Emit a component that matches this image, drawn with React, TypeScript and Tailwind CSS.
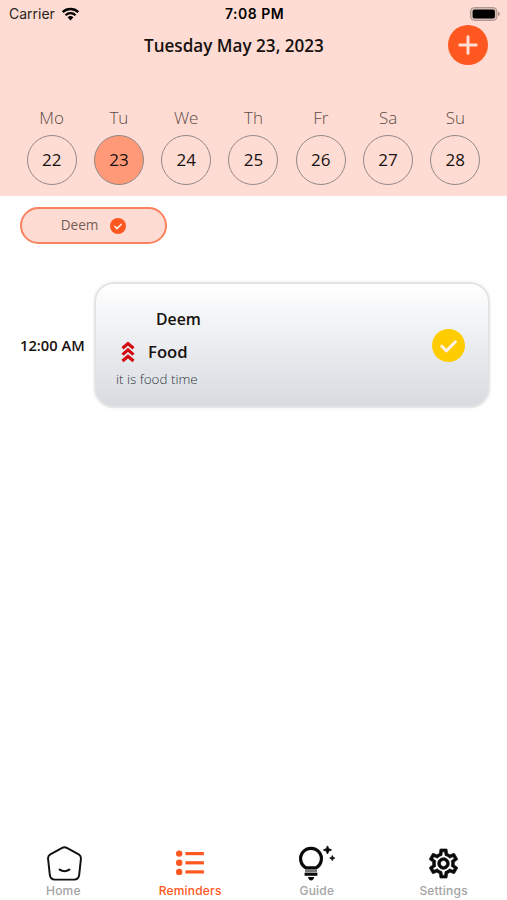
import React, { useState } from 'react'
import { MdOutlineSettings } from 'react-icons/md'

const days = [
  { name: 'Mo', date: 22 },
  { name: 'Tu', date: 23 },
  { name: 'We', date: 24 },
  { name: 'Th', date: 25 },
  { name: 'Fr', date: 26 },
  { name: 'Sa', date: 27 },
  { name: 'Su', date: 28 },
]

function StatusBar() {
  return (
    <div className="grid grid-cols-3 items-center h-[27px] pl-[9px] pr-[7px] font-['Inter',sans-serif] text-black">
      <div className="flex items-center gap-[6px]">
        <span className="text-[14px] leading-none text-[#2a2320]">Carrier</span>
        <svg width="19" height="14" viewBox="0 0 18 14">
          <path d="M1.2 5.1a11.3 11.3 0 0 1 15.6 0" fill="none" stroke="#000" strokeWidth="2.4" />
          <path d="M4 8.2a7.2 7.2 0 0 1 10 0" fill="none" stroke="#000" strokeWidth="2.2" />
          <path d="M6.1 10.3a4.3 4.3 0 0 1 5.8 0L9 13.4z" fill="#000" />
        </svg>
      </div>
      <span className="pt-px text-center text-[14px] leading-none font-semibold tracking-[0.5px] whitespace-nowrap">7:08 PM</span>
      <svg className="justify-self-end" width="30" height="14" viewBox="0 0 30 14">
        <rect x="0.6" y="0.6" width="26.3" height="12.8" rx="3.6" fill="#d8bfb8" stroke="#a8918b" />
        <rect x="2.6" y="2.6" width="22.3" height="8.8" rx="2" fill="#000" />
        <path d="M28 4.8c1.2.3 1.7 1.2 1.7 2.2S29.2 8.9 28 9.2z" fill="#a8918b" />
      </svg>
    </div>
  )
}

function HomeIcon() {
  return (
    <svg className="ml-[2px]" width="35" height="35" viewBox="0 0 36 36" fill="none" stroke="#111" strokeLinecap="round" strokeLinejoin="round">
      <path
        d="M15.6 1.9Q18 .6 20.4 1.9L32.6 8.7Q35.2 10.2 34.9 13.2L33.1 29.8Q32.5 34.6 28 34.6H8Q3.5 34.6 2.9 29.8L1.1 13.2Q.8 10.2 3.4 8.7Z"
        strokeWidth="2"
      />
      <path d="M13 24.3Q18 27.6 23 24.3" strokeWidth="2.2" />
    </svg>
  )
}

function ListIcon() {
  return (
    <svg width="30" height="28" viewBox="0 0 30 28" fill="#ff5720">
      <circle cx="4.2" cy="4.6" r="3.2" />
      <circle cx="4.2" cy="13.8" r="3.2" />
      <circle cx="4.2" cy="22.9" r="3.2" />
      <rect x="10.4" y="3" width="18.5" height="3.2" />
      <rect x="10.4" y="12.2" width="18.5" height="3.2" />
      <rect x="10.4" y="21.3" width="18.5" height="3.2" />
    </svg>
  )
}

function GuideIcon() {
  return (
    <svg width="38" height="36" viewBox="0 0 38 36">
      <path d="M8 22.8A10.4 10.4 0 1 1 18 22.8Z" fill="none" stroke="#0a0a0a" strokeWidth="3.2" strokeLinejoin="round" />
      <rect x="7" y="24.2" width="12" height="2.8" fill="#777" />
      <rect x="6.6" y="27.6" width="12.8" height="3.2" fill="#0a0a0a" />
      <path d="M10 32h6.2q-.6 3.4-3.1 3.4t-3.1-3.4z" fill="#0a0a0a" />
      <path d="M29.5.9l1.2 2.8 2.8 1.2-2.8 1.2-1.2 2.8-1.2-2.8-2.8-1.2 2.8-1.2z" fill="#0a0a0a" stroke="#0a0a0a" strokeWidth="1" />
      <path d="M34.3 10.5l.8 1.8 1.8.8-1.8.8-.8 1.8-.8-1.8-1.8-.8 1.8-.8z" fill="#0a0a0a" stroke="#0a0a0a" strokeWidth=".7" />
    </svg>
  )
}

function CheckCircle({ size, color }: { size: number; color: string }) {
  return (
    <svg width={size} height={size} viewBox="0 0 33 33">
      <circle cx="16.5" cy="16.5" r="16.5" fill={color} />
      <path d="M9.7 17.2l4.7 4.7 9-9.1" fill="none" stroke="#fff1e8" strokeWidth="3" strokeLinecap="round" strokeLinejoin="round" />
    </svg>
  )
}

const tabs = [
  { label: 'Home', icon: <HomeIcon /> },
  { label: 'Reminders', icon: <ListIcon /> },
  { label: 'Guide', icon: <GuideIcon /> },
  {
    label: 'Settings',
    icon: <MdOutlineSettings className="[&>path:first-child]:stroke-none" size={35} color="#0a0a0a" strokeWidth={0.4} />,
  },
]

export default function App() {
  const [selected, setSelected] = useState(23)

  return (
    <div className="h-[900px] flex flex-col bg-white font-['Open_Sans',sans-serif] text-[#17110f]">
      <header className="h-[196px] bg-[#ffdcd3]">
        <StatusBar />
        <div className="flex items-center justify-between h-9 pl-[144px] pr-[19px]">
          <h1 className="pt-px text-[17.1px] leading-6 font-semibold whitespace-nowrap">Tuesday May 23, 2023</h1>
          <button className="flex items-center justify-center w-10 h-10 rounded-full bg-[#ff5720]" aria-label="Add reminder">
            <svg width="20" height="20" viewBox="0 0 20 20" stroke="#ffdcd3" strokeWidth="3" strokeLinecap="round">
              <path d="M10 1.8v16.4M1.8 10h16.4" />
            </svg>
          </button>
        </div>

        <div className="grid grid-cols-7 px-[18px] mt-[43px]">
          {days.map((day) => (
            <div key={day.date} className="flex flex-col items-center gap-[5px]">
              <span className="text-[17px] leading-6 font-light text-[#5c4c48]">{day.name}</span>
              <button
                className={
                  day.date === selected
                    ? 'w-[50px] h-[50px] rounded-full border border-[#8f8888] text-[17px] bg-[#ff9978]'
                    : 'w-[50px] h-[50px] rounded-full border border-[#938889] text-[17px]'
                }
                onClick={() => setSelected(day.date)}
              >
                {day.date}
              </button>
            </div>
          ))}
        </div>
      </header>

      <main className="flex-1">
        <div className="flex pl-5 pt-[11px]">
          <button className="flex items-center justify-center gap-[12px] w-[147px] h-[37px] rounded-full border-2 border-[#fb825f] bg-[#ffdcd3] text-[13.6px] text-[#755d57]">
            Deem
            <CheckCircle size={16} color="#ff5720" />
          </button>
        </div>

        <div className="flex items-center mt-[38px] pr-[17px]">
          <span className="w-[94px] pl-[20px] pt-px text-[14.7px] font-semibold whitespace-nowrap">12:00 AM</span>
          <div className="flex flex-1 items-center justify-between h-[126px] pl-5 pr-[23px] rounded-[20px] border-2 border-[#e3e4e5] bg-linear-to-b from-white to-[#d7dbe0] shadow-[0_0_4px_rgba(0,0,0,0.06)]">
            <div className="flex flex-col pt-[5px]">
              <span className="pl-10 text-[15.8px] leading-6 font-semibold">Deem</span>
              <div className="flex items-center gap-[13px] mt-[9px] pl-[5px]">
                <svg width="14" height="22" viewBox="0 0 14 22" fill="none" stroke="#d20a11" strokeWidth="3.2">
                  <path d="M1.5 7.2L7 2.5l5.5 4.7M1.5 13.6L7 8.9l5.5 4.7M1.5 20L7 15.3l5.5 4.7" />
                </svg>
                <span className="text-[16.7px] leading-6 font-semibold">Food</span>
              </div>
              <span className="mt-[5px] text-[13.4px] leading-5 font-light text-[#34393e]">it is food time</span>
            </div>
            <CheckCircle size={33} color="#ffcc00" />
          </div>
        </div>
      </main>

      <nav className="grid grid-cols-4 h-[56px] font-['Inter',sans-serif]">
        {tabs.map((tab) => (
          <a key={tab.label} href="#" className="flex flex-col items-center">
            <span className="flex items-center justify-center h-9 mt-[1px]">{tab.icon}</span>
            <span
              className={
                tab.label === 'Reminders'
                  ? 'mt-[2px] text-[12px] leading-4 font-medium tracking-[0.2px] text-[#ff5720]'
                  : 'mt-[2px] text-[12px] leading-4 font-medium tracking-[0.2px] text-[#a3a3a3]'
              }
            >
              {tab.label}
            </span>
          </a>
        ))}
      </nav>
    </div>
  )
}
